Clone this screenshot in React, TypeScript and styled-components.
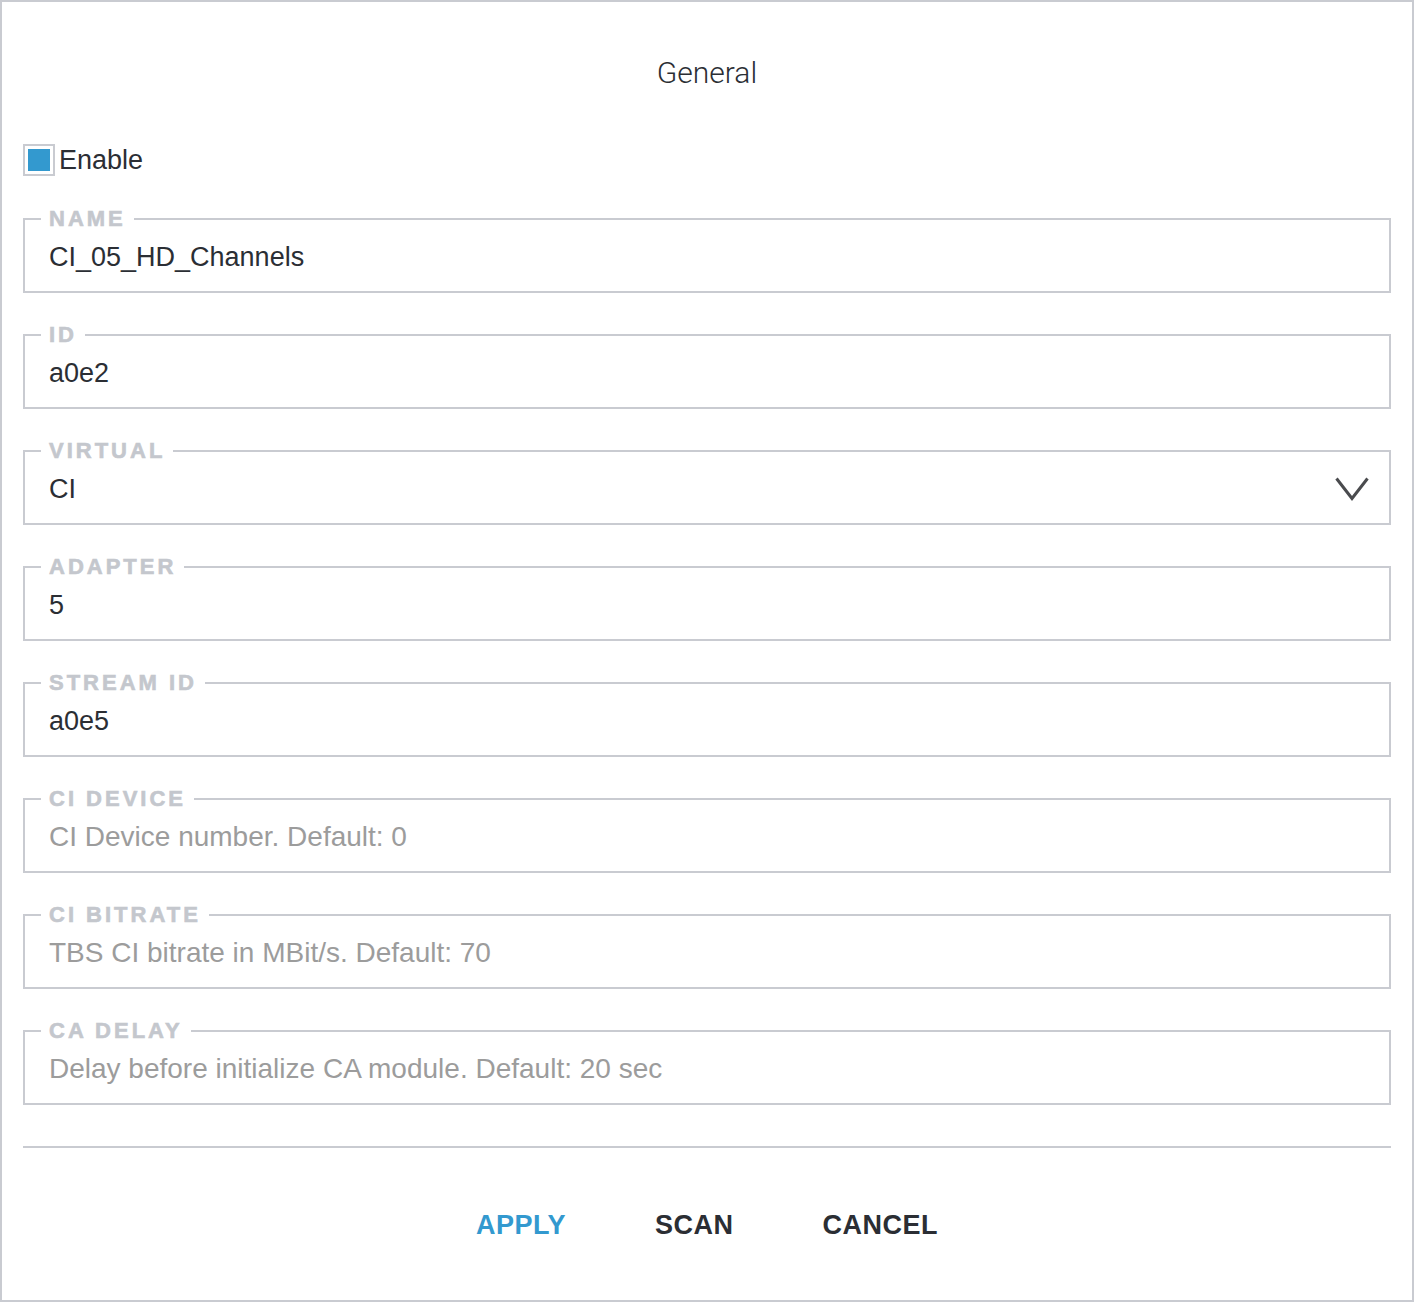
import React from "react";
import styled, { createGlobalStyle } from "styled-components";

const Global = createGlobalStyle`
  html, body { margin: 0; padding: 0; background: #ffffff; }
  * { box-sizing: border-box; }
  body { font-family: "Liberation Sans", Arial, sans-serif; }
`;

const Frame = styled.div`
  width: 1414px;
  height: 1302px;
  border: 2px solid #c9cbd1;
  background: #fff;
  padding: 0 21px;
  display: flex;
  flex-direction: column;
`;

const Title = styled.h1`
  margin: 0;
  padding-top: 51px;
  line-height: 40px;
  text-align: center;
  font-family: Roboto, "Liberation Sans", sans-serif;
  font-weight: 300;
  font-size: 30px;
  color: #2b2e34;
`;

const CheckRow = styled.label`
  margin-top: 51px;
  height: 32px;
  display: flex;
  align-items: center;
  gap: 4px;
  font-size: 27px;
  color: #2b2e34;
`;

const CheckBox = styled.span<{ $checked: boolean }>`
  width: 32px;
  height: 32px;
  border: 2px solid #c9cbd1;
  padding: 3px;
  display: flex;
  &::after {
    content: "";
    flex: 1;
    background: ${(p) => (p.$checked ? "#3399cf" : "transparent")};
  }
`;

const Fields = styled.div`
  margin-top: 31px;
  display: flex;
  flex-direction: column;
  gap: 30px;
`;

const Field = styled.fieldset`
  margin: 0;
  min-width: 0;
  border: 2px solid #c9cbd1;
  padding: 0 20px 0 24px;
`;

const Legend = styled.legend`
  margin-left: -8px;
  padding: 0 8px;
  line-height: 24px;
  font-size: 22px;
  font-weight: 700;
  letter-spacing: 3px;
  color: #c4c7cd;
  -webkit-text-stroke: 0.6px #c4c7cd;
`;

const ValueRow = styled.div`
  padding: 6px 0 14px;
  display: flex;
  align-items: center;
  justify-content: space-between;
`;

const Value = styled.span<{ $placeholder?: boolean }>`
  line-height: 40px;
  font-size: ${(p) => (p.$placeholder ? "28px" : "27px")};
  color: ${(p) => (p.$placeholder ? "#9c9c9c" : "#2b2e34")};
  white-space: nowrap;
`;

const Chevron = styled.svg`
  width: 34px;
  height: 24px;
  flex: none;
`;

const Divider = styled.hr`
  margin: 41px 0 0;
  border: none;
  height: 2px;
  background: #c9cbd1;
`;

const Footer = styled.div`
  margin-top: 57px;
  display: flex;
  justify-content: center;
  gap: 89px;
`;

const ActionButton = styled.button<{ $primary?: boolean }>`
  border: none;
  background: none;
  padding: 0;
  line-height: 40px;
  font-family: "Liberation Sans", Arial, sans-serif;
  font-size: 27px;
  font-weight: 700;
  letter-spacing: 0.5px;
  color: ${(p) => (p.$primary ? "#3399cf" : "#2b2e34")};
  cursor: pointer;
`;

type FieldDef = {
  label: string;
  value?: string;
  placeholder?: string;
  select?: boolean;
};

const fields: FieldDef[] = [
  { label: "NAME", value: "CI_05_HD_Channels" },
  { label: "ID", value: "a0e2" },
  { label: "VIRTUAL", value: "CI", select: true },
  { label: "ADAPTER", value: "5" },
  { label: "STREAM ID", value: "a0e5" },
  { label: "CI DEVICE", placeholder: "CI Device number. Default: 0" },
  { label: "CI BITRATE", placeholder: "TBS CI bitrate in MBit/s. Default: 70" },
  { label: "CA DELAY", placeholder: "Delay before initialize CA module. Default: 20 sec" },
];

export default function App() {
  return (
    <>
      <Global />
      <Frame>
        <Title>General</Title>
        <CheckRow>
          <CheckBox $checked />
          Enable
        </CheckRow>
        <Fields>
          {fields.map((f) => (
            <Field key={f.label}>
              <Legend>{f.label}</Legend>
              <ValueRow>
                {f.value !== undefined ? (
                  <Value>{f.value}</Value>
                ) : (
                  <Value $placeholder>{f.placeholder}</Value>
                )}
                {f.select && (
                  <Chevron viewBox="0 0 34 24">
                    <path
                      d="M1.5 1.5 L17 21.5 L32.5 1.5"
                      fill="none"
                      stroke="#4a4b4e"
                      strokeWidth="3"
                    />
                  </Chevron>
                )}
              </ValueRow>
            </Field>
          ))}
        </Fields>
        <Divider />
        <Footer>
          <ActionButton $primary>APPLY</ActionButton>
          <ActionButton>SCAN</ActionButton>
          <ActionButton>CANCEL</ActionButton>
        </Footer>
      </Frame>
    </>
  );
}
